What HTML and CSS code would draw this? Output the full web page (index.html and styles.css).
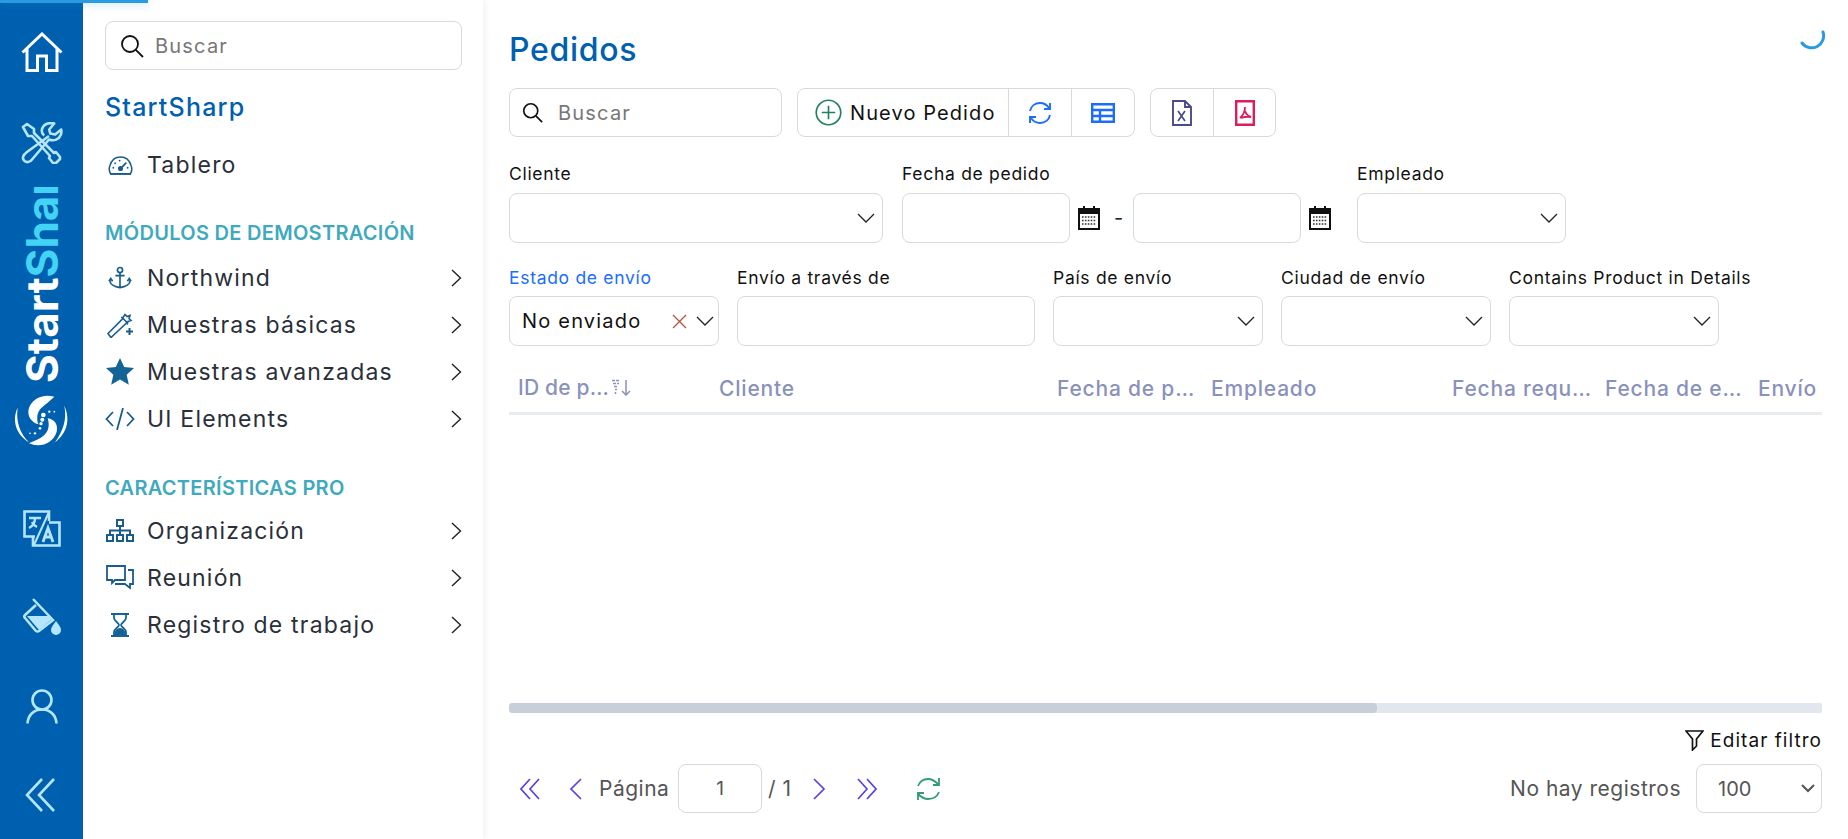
FILE: index.html
```html
<!DOCTYPE html>
<html lang="es">
<head>
    <meta charset="UTF-8">
    <title>Pedidos</title>
    <link rel="stylesheet" href="styles.css">
</head>
<body>
    <div class="page-progress"></div>

    <!-- Icon rail -->
    <nav class="rail">
        <a class="rail-btn rail-home">
            <svg width="42" height="40" viewBox="0 0 42 40" fill="none" stroke="#fff" stroke-width="3"><path d="M1.500 20.500 21 2 40.500 20.500M6 17v21.500h10.500V24h9v14.500H36V17"/></svg>
        </a>
        <a class="rail-btn rail-tools">
            <svg width="42" height="42" viewBox="0 0 42 42" fill="none" stroke="#b5e6fb" stroke-width="2.600" stroke-linejoin="round"><path d="M2 5 6 2l7 5v4l20 20 2-1 4 5v2l-4 4h-3l-4-5 1-2L11 14H7z"/><path d="M28 14 6 30c-4 3-5 6-3 8.500s6 2 8-1l17-20c5 2 10 0 12-5 .5-2 .5-3 .2-5l-6 5-5-1-1-4 5-6c-5-1-10 0-12 5-1 3-.5 5 2 7"/></svg>
        </a>
        <div class="rail-brand"><span class="brand-start">Start</span><span class="brand-sharp">Sharp</span></div>
        <a class="rail-logo">
            <svg width="75" height="70" viewBox="0 0 225 210" fill="#fff"><path d="M148 35C115 25 80 40 71 72 66 95 80 112 100 118 94 100 96 80 110 68 120 58 135 48 148 35z"/><path d="M72 175C105 190 145 175 155 140 160 118 148 103 128 100 134 118 132 138 118 150 105 162 88 168 72 175z"/><path d="M38 68C22 100 28 145 72 172 45 145 32 110 38 68z"/><path d="M178 62C195 100 190 140 150 172 175 135 186 105 178 62z"/><circle cx="115" cy="90" r="7"/><circle cx="112" cy="104" r="6"/><circle cx="108" cy="116" r="5"/><circle cx="105" cy="130" r="4"/><circle cx="90" cy="145" r="3.500"/><circle cx="75" cy="145" r="2.500"/><circle cx="133" cy="80" r="3.500"/><circle cx="148" cy="80" r="2.500"/></svg>
        </a>
        <a class="rail-btn rail-translate">
            <svg width="38" height="37" viewBox="0 0 38 37" fill="none" stroke="#b5e6fb" stroke-width="2.600"><path d="M26 11V1.500H1.500v25H12"/><path d="M26 12.500h10.500v23H10V27"/><path d="M6 8h12M12 8c0 5-2 8-6 10M9 12c1 2 3 4 5 5" stroke-width="2.400"/><path d="M20 32l5-14 5 14M22 27h6" stroke-width="2.800"/><path d="M26 2 11 35" stroke-width="2"/></svg>
        </a>
        <a class="rail-btn rail-bucket">
            <svg width="38" height="38" viewBox="0 0 38 38"><path d="M10 1l20 21-14 11c-1 .7-2 .7-3 0L2 20c-1-1-1-2 0-3L13 7" fill="none" stroke="#b5e6fb" stroke-width="2.500"/><path d="M4 18h23l2 3-13 11z" fill="#b5e6fb"/><path d="M33 23c-2 3-5 6-5 9a5 5 0 0 0 10 0c0-3-3-6-5-9z" fill="#b5e6fb"/></svg>
        </a>
        <a class="rail-btn rail-user">
            <svg width="32" height="35" viewBox="0 0 32 35" fill="none" stroke="#b5e6fb" stroke-width="2.600"><circle cx="16" cy="11" r="9.500"/><path d="M1.500 34.500C2 26 8 20.500 16 20.500S30 26 30.500 34.500"/></svg>
        </a>
        <a class="rail-btn rail-collapse">
            <svg width="30" height="34" viewBox="0 0 30 34" fill="none" stroke="#b5e6fb" stroke-width="2.600"><path d="M17 1 2 17l15 16M29 1 14 17l15 16"/></svg>
        </a>
    </nav>

    <!-- Sidebar -->
    <aside class="sidebar">
        <div class="search-box side-search">
            <svg class="search-icon" width="24" height="24" viewBox="0 0 24 24" fill="none" stroke="#111" stroke-width="1.800"><circle cx="10" cy="10" r="8"/><path d="m15.800 15.800 7.200 7.200"/></svg>
            <span class="placeholder">Buscar</span>
        </div>
        <div class="side-title">StartSharp</div>
        <ul class="menu menu-top">
            <li>
                <span class="icon-box"><svg width="25" height="20" viewBox="0 0 28 22" fill="none" stroke="#1a5c8c" stroke-width="1.700" stroke-linecap="round"><path d="M3 21C1 18 1 15 2 12 4 5 9 2 14 2s10 3 12 10c1 3 1 6-1 9z"/><path d="m14 15 6-6M3 21h22" stroke-width="2"/><circle cx="14" cy="15" r="2" fill="#1a5c8c"/><path d="M6 14v.1M8 9v.1M13 6v.1M22 14v.1" stroke-width="2"/></svg></span>
                Tablero
            </li>
        </ul>
        <div class="menu-head head-demo">MÓDULOS DE DEMOSTRACIÓN</div>
        <ul class="menu">
            <li>
                <span class="icon-box"><svg width="24" height="23" viewBox="0 0 26 24" fill="none" stroke="#1a5c8c" stroke-width="1.800"><circle cx="13" cy="4" r="2.800"/><path d="M13 7v16M8 10h10M2 15c0 4 5 7 11 8 6-1 11-4 11-8M1 16l2-3 2 3M21 16l2-3 2 3"/></svg></span>
                Northwind
                <svg class="chev" width="11" height="18" viewBox="0 0 11 18" fill="none" stroke="#222" stroke-width="1.400"><path d="m1 1 8.500 8L1 17"/></svg>
            </li>
            <li>
                <span class="icon-box"><svg width="28" height="27" viewBox="0 0 28 26" fill="none" stroke="#1a5c8c" stroke-width="1.600"><path d="M2 22 17 7l4 4L5 26z"/><path d="M15 6h2l2-3 2 2 3-1-1 3 2 2-3 1-1 3"/><path d="M20 20h7M23.500 16.500v7M16 18v.1" stroke-width="2"/></svg></span>
                Muestras básicas
                <svg class="chev" width="11" height="18" viewBox="0 0 11 18" fill="none" stroke="#222" stroke-width="1.400"><path d="m1 1 8.500 8L1 17"/></svg>
            </li>
            <li>
                <span class="icon-box"><svg width="28" height="27" viewBox="0 0 28 27"><path d="m14 0 4.200 9 9.800 1-7.300 6.700 2.100 10L14 21.500l-8.800 5.200 2.100-10L0 10l9.800-1z" fill="#146396"/></svg></span>
                Muestras avanzadas
                <svg class="chev" width="11" height="18" viewBox="0 0 11 18" fill="none" stroke="#222" stroke-width="1.400"><path d="m1 1 8.500 8L1 17"/></svg>
            </li>
            <li>
                <span class="icon-box"><svg width="30" height="22" viewBox="0 0 30 22" fill="none" stroke="#1a5c8c" stroke-width="1.800"><path d="M8 4 1.500 11 8 18M22 4l6.500 7-6.500 7M18 0l-6 22"/></svg></span>
                UI Elements
                <svg class="chev" width="11" height="18" viewBox="0 0 11 18" fill="none" stroke="#222" stroke-width="1.400"><path d="m1 1 8.500 8L1 17"/></svg>
            </li>
        </ul>
        <div class="menu-head head-pro">CARACTERÍSTICAS PRO</div>
        <ul class="menu">
            <li>
                <span class="icon-box"><svg width="28" height="23" viewBox="0 0 28 23" fill="none" stroke="#1a5c8c" stroke-width="2"><path d="M11 1h6v6h-6zM1 16h6v6H1zM11 16h6v6h-6zM21 16h6v6h-6zM14 7v9M4 16v-4.500h20V16"/></svg></span>
                Organización
                <svg class="chev" width="11" height="18" viewBox="0 0 11 18" fill="none" stroke="#222" stroke-width="1.400"><path d="m1 1 8.500 8L1 17"/></svg>
            </li>
            <li>
                <span class="icon-box"><svg width="28" height="25" viewBox="0 0 28 25" fill="none" stroke="#1a5c8c" stroke-width="1.800"><path d="M1 1h18v14H9l-3 3v-3H1zM22 5h5v14h-3v4l-5-4H9"/></svg></span>
                Reunión
                <svg class="chev" width="11" height="18" viewBox="0 0 11 18" fill="none" stroke="#222" stroke-width="1.400"><path d="m1 1 8.500 8L1 17"/></svg>
            </li>
            <li>
                <span class="icon-box"><svg width="18" height="24" viewBox="0 0 18 24" fill="none" stroke="#146396" stroke-width="1.800"><path d="M0 1h18M0 23h18M3 1v4c0 3 5 5 5 7s-5 4-5 7v4M15 1v4c0 3-5 5-5 7s5 4 5 7v4"/><path d="M4 22c0-4 3-6 5-6s5 2 5 6z" fill="#146396"/></svg></span>
                Registro de trabajo
                <svg class="chev" width="11" height="18" viewBox="0 0 11 18" fill="none" stroke="#222" stroke-width="1.400"><path d="m1 1 8.500 8L1 17"/></svg>
            </li>
        </ul>
    </aside>

    <!-- Main content -->
    <main class="content">
        <div class="title-row">
            <h1>Pedidos</h1>
            <svg class="spinner" width="28" height="24" viewBox="0 0 28 24" fill="none" stroke="#2a9be0" stroke-width="3" stroke-linecap="round"><path d="M25 4A12 12 0 0 1 4 15"/></svg>
        </div>

        <div class="toolbar">
            <div class="search-box grid-search">
                <svg class="search-icon" width="21" height="21" viewBox="0 0 24 24" fill="none" stroke="#111" stroke-width="1.900"><circle cx="10" cy="10" r="8"/><path d="m15.800 15.800 7.200 7.200"/></svg>
                <span class="placeholder">Buscar</span>
            </div>
            <div class="btn-group">
                <button class="tool-btn btn-add">
                    <svg width="27" height="27" viewBox="0 0 26 26" fill="none" stroke="#23805c" stroke-width="1.600"><circle cx="13" cy="13" r="11.800"/><path d="M13 6.500v13M6.500 13h13"/></svg>
                    Nuevo Pedido
                </button>
                <button class="tool-btn btn-icon">
                    <svg width="24" height="24" viewBox="0 0 24 24" fill="none" stroke="#1a6dff" stroke-width="1.900"><path d="M2 10C3 5 7 2 12 2c4 0 7 2 9 5"/><path d="M22 2v6h-6"/><path d="M22 14c-1 5-5 8-10 8-4 0-7-2-9-5"/><path d="M2 22v-6h6"/></svg>
                </button>
                <button class="tool-btn btn-icon">
                    <svg width="24" height="20" viewBox="0 0 24 20" fill="none" stroke="#1a6dff" stroke-width="2.400"><path d="M1.200 1.200h21.600v17.600H1.200zM1 7h22M1 13h22M9 7v12"/></svg>
                </button>
            </div>
            <div class="btn-group">
                <button class="tool-btn btn-export">
                    <svg width="20" height="26" viewBox="0 0 20 26" fill="none" stroke="#4a4a8c" stroke-width="1.900"><path d="M1 1h12l6 6v18H1zM13 1v6h6"/><path d="m6 11 7 10M13 11 6 21" stroke-width="1.700"/></svg>
                </button>
                <button class="tool-btn btn-export">
                    <svg width="20" height="26" viewBox="0 0 20 26" fill="none" stroke="#dc1c5c" stroke-width="2.400"><path d="M1.200 1.200h17.600v23.600H1.200z"/><path d="M10 7c0 4-1.500 8-5 11M10 11c1 3 3 5 6 6-3-.5-7 0-10 1" stroke-width="1.800"/></svg>
                </button>
            </div>
        </div>

        <div class="filter-row row-one">
            <div class="field f-cliente">
                <label>Cliente</label>
                <div class="input has-arrow"><svg class="arrow" width="18" height="10" viewBox="0 0 18 10" fill="none" stroke="#222" stroke-width="1.300"><path d="m1 1 8 8 8-8"/></svg></div>
            </div>
            <div class="field f-fecha">
                <label>Fecha de pedido</label>
                <div class="date-range">
                    <div class="input date-input"></div>
                    <svg class="cal" width="22" height="24" viewBox="0 0 22 24"><path d="M1 3h20v20H1z" fill="#fff" stroke="#111" stroke-width="2"/><path d="M1 3h20v5H1zM5 0h2v4H5zM15 0h2v4h-2z" fill="#111"/><path d="M4 11h14M4 14.500h14M4 18h14" stroke="#333" stroke-width="1.600" stroke-dasharray="1.600 1.300"/></svg>
                    <span class="dash">-</span>
                    <div class="input date-input"></div>
                    <svg class="cal" width="22" height="24" viewBox="0 0 22 24"><path d="M1 3h20v20H1z" fill="#fff" stroke="#111" stroke-width="2"/><path d="M1 3h20v5H1zM5 0h2v4H5zM15 0h2v4h-2z" fill="#111"/><path d="M4 11h14M4 14.500h14M4 18h14" stroke="#333" stroke-width="1.600" stroke-dasharray="1.600 1.300"/></svg>
                </div>
            </div>
            <div class="field f-empleado">
                <label>Empleado</label>
                <div class="input has-arrow"><svg class="arrow" width="18" height="10" viewBox="0 0 18 10" fill="none" stroke="#222" stroke-width="1.300"><path d="m1 1 8 8 8-8"/></svg></div>
            </div>
        </div>

        <div class="filter-row row-two">
            <div class="field f-estado">
                <label class="active">Estado de envío</label>
                <div class="input has-arrow">
                    <span class="value">No enviado</span>
                    <svg class="clear" width="15" height="15" viewBox="0 0 15 15" fill="none" stroke="#b5533f" stroke-width="1.300"><path d="m1 1 13 13M14 1 1 14"/></svg>
                    <svg class="arrow arrow-tight" width="18" height="10" viewBox="0 0 18 10" fill="none" stroke="#222" stroke-width="1.300"><path d="m1 1 8 8 8-8"/></svg>
                </div>
            </div>
            <div class="field f-via">
                <label>Envío a través de</label>
                <div class="input"></div>
            </div>
            <div class="field f-pais">
                <label>País de envío</label>
                <div class="input has-arrow"><svg class="arrow" width="18" height="10" viewBox="0 0 18 10" fill="none" stroke="#222" stroke-width="1.300"><path d="m1 1 8 8 8-8"/></svg></div>
            </div>
            <div class="field f-ciudad">
                <label>Ciudad de envío</label>
                <div class="input has-arrow"><svg class="arrow" width="18" height="10" viewBox="0 0 18 10" fill="none" stroke="#222" stroke-width="1.300"><path d="m1 1 8 8 8-8"/></svg></div>
            </div>
            <div class="field f-ciudad">
                <label>Contains Product in Details</label>
                <div class="input has-arrow"><svg class="arrow" width="18" height="10" viewBox="0 0 18 10" fill="none" stroke="#222" stroke-width="1.300"><path d="m1 1 8 8 8-8"/></svg></div>
            </div>
        </div>

        <div class="grid">
            <div class="grid-head">
                <div class="col col-id">ID de p…<svg width="20" height="17" viewBox="0 0 20 17" fill="none" stroke="#8a91bb" stroke-width="1.500"><path d="M1 1.500h8M2 4.500h6M3 7.500h4M4 10.500h2M4.500 13v2" stroke-dasharray="3 1"/><path d="M15 1v15M11 12l4 4 4-4"/></svg></div>
                <div class="col col-cliente">Cliente</div>
                <div class="col col-fecha">Fecha de p…</div>
                <div class="col col-empleado">Empleado</div>
                <div class="col col-req">Fecha requ…</div>
                <div class="col col-env">Fecha de e…</div>
                <div class="col col-via">Envío de</div>
            </div>
            <div class="grid-body"></div>
            <div class="h-scroll"><div class="h-thumb"></div></div>
        </div>

        <div class="filter-edit">
            <svg width="19" height="21" viewBox="0 0 19 21" fill="none" stroke="#111" stroke-width="1.700"><path d="M1 1h17l-6.500 8v7l-4 4V9z"/></svg>
            Editar filtro
        </div>

        <div class="pager">
            <svg class="pg-icon" width="20" height="22" viewBox="0 0 20 22" fill="none" stroke="#5b3fe8" stroke-width="1.700"><path d="M10 1 1 11l9 10M19 1l-9 10 9 10"/></svg>
            <svg class="pg-icon pg-prev" width="13" height="22" viewBox="0 0 13 22" fill="none" stroke="#5b3fe8" stroke-width="1.700"><path d="M12 1 2 11l10 10"/></svg>
            <span class="pg-text pg-label">Página</span>
            <div class="input pg-input">1</div>
            <span class="pg-text pg-total">/ 1</span>
            <svg class="pg-icon pg-next" width="13" height="22" viewBox="0 0 13 22" fill="none" stroke="#5b3fe8" stroke-width="1.700"><path d="m1 1 10 10L1 21"/></svg>
            <svg class="pg-icon pg-last" width="20" height="22" viewBox="0 0 20 22" fill="none" stroke="#5b3fe8" stroke-width="1.700"><path d="m1 1 9 10-9 10M10 1l9 10-9 10"/></svg>
            <svg class="pg-icon pg-reload" width="23" height="24" viewBox="0 0 23 24" fill="none" stroke="#2e9c78" stroke-width="1.800"><path d="M1 9c2-5 6-7 10-7 4 0 7 2 10 5"/><path d="M22 1v7h-6"/><path d="M22 15c-2 5-6 7-11 7-4 0-7-2-10-5"/><path d="M1 23v-7h6"/></svg>
            <div class="pager-right">
                <span class="pg-text">No hay registros</span>
                <div class="input pg-size">100
                    <svg width="14" height="9" viewBox="0 0 14 9" fill="none" stroke="#555" stroke-width="2"><path d="m1 1 6 6 6-6"/></svg>
                </div>
            </div>
        </div>
    </main>
</body>
</html>
```

FILE: styles.css
```css
/* Reset */
html, body {
    margin: 0;
    padding: 0;
    height: 100%;
    overflow: hidden;
}

body {
    display: flex;
    font-family: Inter, "Open Sans", sans-serif;
    color: #222;
    background-color: #fff;
}

svg {
    display: block;
    flex: none;
}

.page-progress {
    position: fixed;
    top: 0;
    left: 0;
    width: 148px;
    height: 3px;
    background-color: #2a9be0;
    box-shadow: 0 0 8px rgba(42, 155, 224, 0.5);
    z-index: 10;
}

/* Icon rail */
.rail {
    width: 83px;
    height: 839px;
    flex: none;
    background-color: #0060b0;
    display: flex;
    flex-direction: column;
    align-items: center;
    overflow: hidden;
}

.rail-btn, .rail-logo {
    display: block;
}

.rail-home { margin-top: 32px; }
.rail-tools { margin-top: 50px; }
.rail-logo { margin-top: 2px; margin-left: 2px; }
.rail-translate { margin-top: 55px; }
.rail-bucket { margin-top: 51px; }
.rail-user { margin-top: 53px; }
.rail-collapse { margin-top: 54px; margin-left: -3px; }

.rail-brand {
    margin-top: 23px;
    height: 196px;
    overflow: hidden;
    writing-mode: vertical-rl;
    transform: rotate(180deg);
    font-size: 44px;
    line-height: 44px;
    font-weight: 700;
    white-space: nowrap;
    color: #fff;
}

.brand-sharp {
    color: #43d3f4;
}

/* Sidebar */
.sidebar {
    width: 400px;
    height: 839px;
    flex: none;
    box-sizing: border-box;
    padding: 21px 21px 0 22px;
    box-shadow: 3px 0 6px rgba(0, 0, 0, 0.05);
}

.search-box {
    display: flex;
    align-items: center;
    box-sizing: border-box;
    background: #fff;
    border: 1px solid #d5dae0;
    border-radius: 8px;
}

.side-search {
    height: 49px;
    padding-left: 14px;
    gap: 11px;
}

.placeholder {
    font-size: 20px;
    letter-spacing: 1.2px;
    color: #777;
}

.side-title {
    margin-top: 20px;
    font-size: 25px;
    line-height: 34px;
    font-weight: 500;
    letter-spacing: 1.200px;
    color: #0060b0;
}

.menu {
    list-style: none;
    margin: 0;
    padding: 0;
}

.menu-top {
    margin-top: 17px;
}

.menu li {
    display: flex;
    align-items: center;
    height: 47px;
    font-size: 23px;
    letter-spacing: 1.2px;
    color: #2a2f3a;
}

.icon-box {
    display: flex;
    justify-content: center;
    width: 30px;
    margin-right: 12px;
}

.chev {
    margin-left: auto;
}

.menu-head {
    font-size: 20px;
    line-height: 28px;
    font-weight: 600;
    letter-spacing: 0.3px;
    color: #3fa9bd;
    white-space: nowrap;
}

.head-demo { margin-top: 31px; margin-bottom: 7px; }
.head-pro { margin-top: 32px; margin-bottom: 5px; }

/* Main */
.content {
    flex: 1;
    min-width: 0;
    box-sizing: border-box;
    padding: 0 26px;
    overflow: hidden;
}

.title-row {
    display: flex;
    justify-content: space-between;
    height: 88px;
    box-sizing: border-box;
    padding-top: 31px;
}

h1 {
    margin: 0;
    font-size: 32px;
    line-height: 38px;
    font-weight: 500;
    letter-spacing: 0.7px;
    color: #0060b0;
}

.spinner {
    margin-top: -3px;
    margin-right: -4px;
}

.toolbar {
    display: flex;
    gap: 15px;
    height: 49px;
}

.grid-search {
    width: 273px;
    padding-left: 12px;
    gap: 15px;
}

.btn-group {
    display: flex;
    border: 1px solid #d5dae0;
    border-radius: 8px;
    box-sizing: border-box;
}

.tool-btn {
    display: flex;
    align-items: center;
    justify-content: center;
    height: 100%;
    margin: 0;
    padding: 0;
    background: none;
    border: none;
    border-left: 1px solid #d5dae0;
    font-family: inherit;
    font-size: 20px;
    letter-spacing: 1.1px;
    white-space: nowrap;
    color: #111;
}

.tool-btn:first-child {
    border-left: none;
}

.btn-add { width: 210px; gap: 8px; justify-content: flex-start; padding-left: 17px; }
.btn-icon { width: 63px; }
.btn-export { width: 62px; }

/* Filters */
.filter-row {
    display: flex;
}

.row-one { margin-top: 24px; }
.row-two { margin-top: 21px; }

.field label {
    display: block;
    height: 32px;
    font-size: 17.500px;
    line-height: 26px;
    letter-spacing: 0.7px;
    color: #111;
    white-space: nowrap;
}

.row-two .field label {
    line-height: 28px;
}

.field label.active {
    color: #1a6dff;
}

.input {
    display: flex;
    align-items: center;
    box-sizing: border-box;
    height: 50px;
    border: 1px solid #d5dae0;
    border-radius: 8px;
    background: #fff;
}

.has-arrow .arrow {
    margin-left: auto;
    margin-right: 7px;
}

.f-cliente { width: 374px; margin-right: 19px; }
.f-fecha { width: 429px; margin-right: 26px; }
.f-empleado { width: 209px; }

.f-estado { width: 210px; margin-right: 18px; }
.f-via { width: 298px; margin-right: 18px; }
.f-pais { width: 210px; margin-right: 18px; }
.f-ciudad { width: 210px; margin-right: 18px; }

.date-range {
    display: flex;
    align-items: center;
}

.date-input {
    width: 168px;
}

.date-range .cal {
    margin-left: 8px;
}

.dash {
    width: 33px;
    box-sizing: border-box;
    padding-left: 4px;
    text-align: center;
    font-size: 20px;
}

.value {
    padding-left: 12px;
    font-size: 20px;
    letter-spacing: 1.2px;
    color: #111;
}

.clear {
    margin-left: auto;
    margin-right: 9px;
}

.has-arrow .arrow-tight {
    margin-left: 0;
    margin-right: 4px;
}

/* Grid */
.grid {
    margin-top: 12px;
    width: 1313px;
}

.grid-head {
    display: flex;
    height: 57px;
    box-sizing: border-box;
    border-bottom: 3px solid #e9ecef;
    overflow: hidden;
    white-space: nowrap;
    font-size: 21px;
    line-height: 62px;
    font-weight: 500;
    letter-spacing: 0.8px;
    color: #8a91bb;
    padding-left: 9px;
}

.col {
    flex: none;
}

.col-id { width: 201px; display: flex; align-items: center; gap: 2px; height: 54px; padding-top: 5px; box-sizing: border-box; line-height: normal; letter-spacing: 0.2px; }
.col-cliente { width: 338px; }
.col-fecha { width: 154px; }
.col-empleado { width: 241px; }
.col-req { width: 153px; }
.col-env { width: 153px; }

.grid-body {
    height: 288px;
}

.h-scroll {
    height: 10px;
    background-color: #e2e6ee;
    border-radius: 2px;
}

.h-thumb {
    width: 868px;
    height: 100%;
    background-color: #c8cfd9;
    border-radius: 4px;
}

.filter-edit {
    display: flex;
    justify-content: flex-end;
    align-items: center;
    gap: 6px;
    width: 1313px;
    margin-top: 14px;
    height: 26px;
    font-size: 19px;
    letter-spacing: 1.05px;
    color: #111;
}

/* Pager */
.pager {
    display: flex;
    align-items: center;
    width: 1313px;
    height: 49px;
    margin-top: 11px;
    padding-left: 11px;
    box-sizing: border-box;
}

.pg-prev { margin-left: 29px; }
.pg-next { margin-left: 25px; }
.pg-last { margin-left: 31px; }
.pg-reload { margin-left: 40px; }

.pg-text {
    font-size: 21px;
    letter-spacing: 0.5px;
    color: #555;
    white-space: nowrap;
}

.pg-label { width: 73px; margin-left: 17px; }
.pg-total { width: 20px; margin-left: 6px; }

.pg-input {
    justify-content: center;
    width: 84px;
    height: 49px;
    margin-left: 6px;
    font-size: 19px;
    color: #555;
}

.pager-right {
    display: flex;
    align-items: center;
    gap: 15px;
    margin-left: auto;
}

.pg-size {
    width: 126px;
    height: 49px;
    padding: 0 6px 0 21px;
    justify-content: space-between;
    font-size: 20px;
    color: #555;
}
```
